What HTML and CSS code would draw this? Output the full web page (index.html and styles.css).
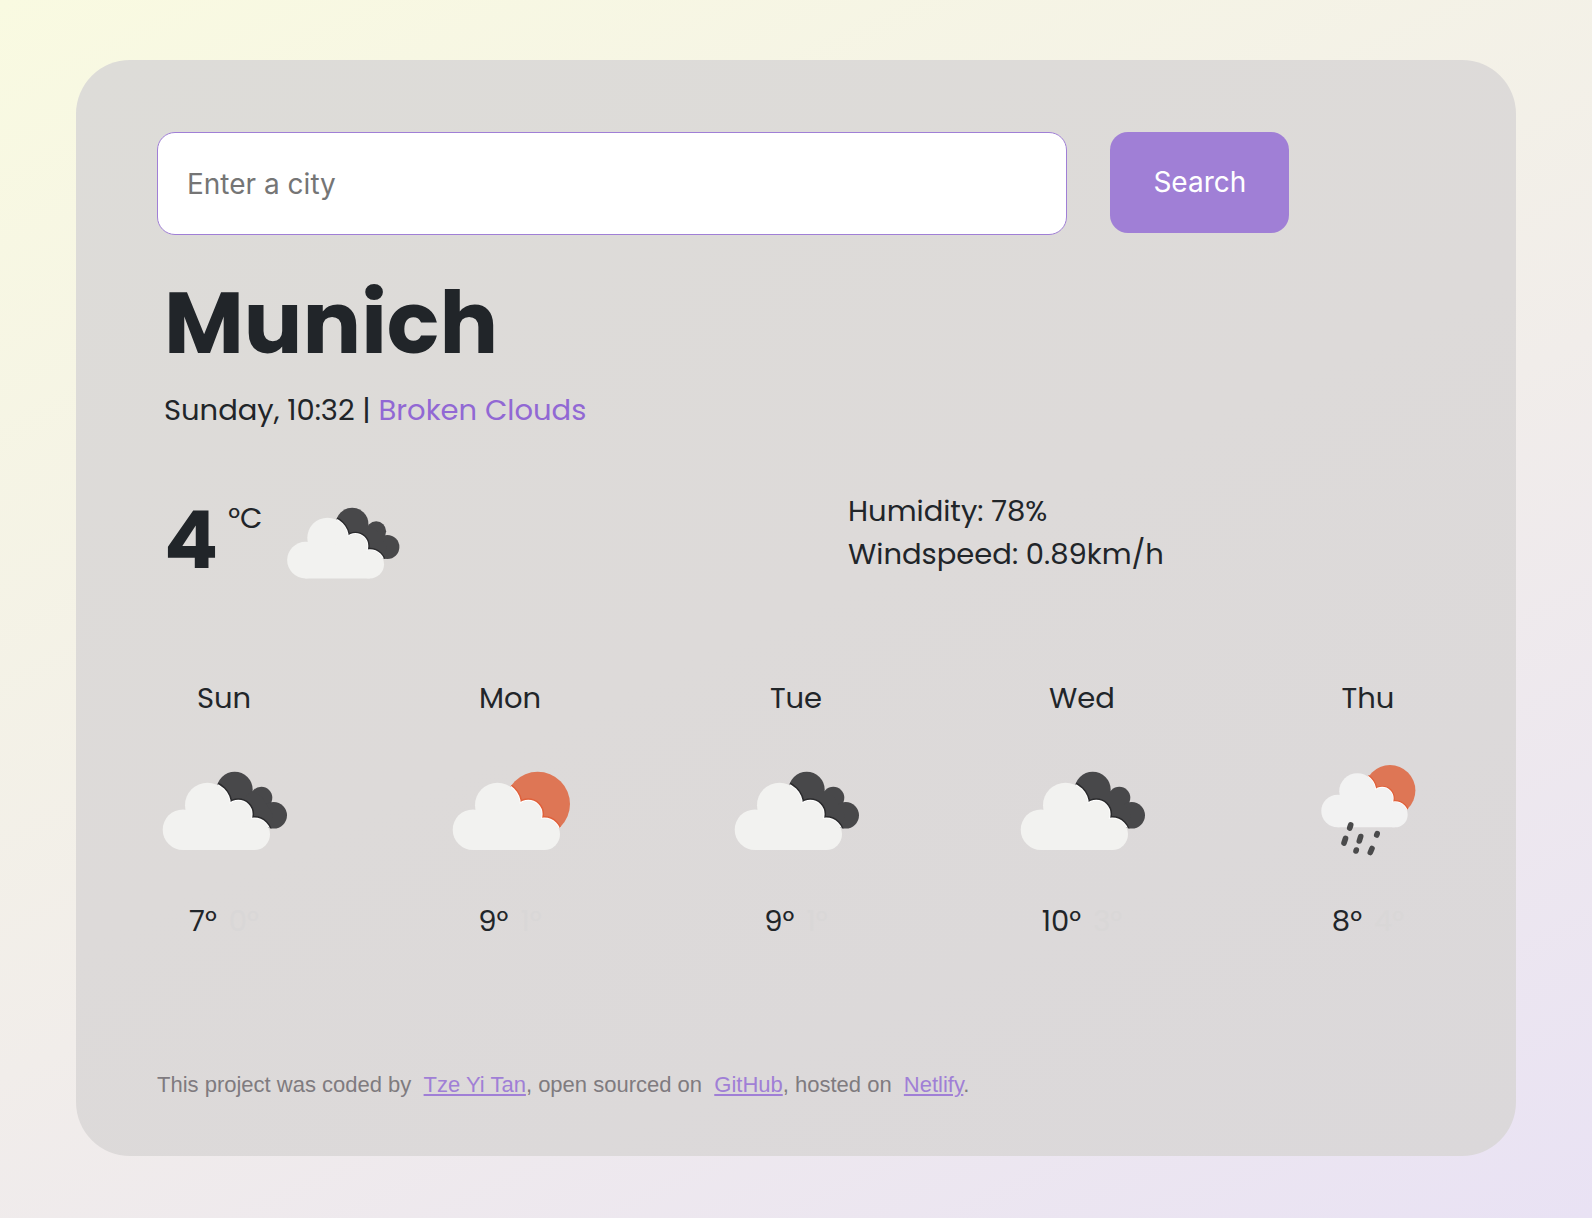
FILE: index.html
```html
<!DOCTYPE html>
<html lang="en">
<head>
<meta charset="utf-8">
<meta name="viewport" content="width=device-width, initial-scale=1">
<title>Weather in Munich</title>
<link rel="stylesheet" href="styles.css">
</head>
<body>
<svg class="sprite" aria-hidden="true">
  <defs>
    <g id="cloud">
      <circle cx="26" cy="88.7" r="20.3"/>
      <circle cx="50.5" cy="64.2" r="22.5"/>
      <circle cx="81.3" cy="73" r="13.3"/>
      <circle cx="97.3" cy="93.3" r="15.7"/>
      <path d="M26 109V88L50 70L81 73L97 92V109Z"/>
    </g>
    <g id="dark">
      <circle cx="77.7" cy="48.7" r="18"/>
      <circle cx="104.3" cy="56.7" r="11"/>
      <circle cx="116.7" cy="74.3" r="13.3"/>
      <path d="M77 66L95 50L105 56L116 74L112 86L84 86Z"/>
    </g>
    <clipPath id="dark-clip">
      <circle cx="77.7" cy="48.7" r="18"/>
      <circle cx="104.3" cy="56.7" r="11"/>
      <circle cx="116.7" cy="74.3" r="13.3"/>
      <path d="M77 66L95 50L105 56L116 74L112 86L84 86Z"/>
    </clipPath>
    <clipPath id="sun-clip"><circle cx="90.7" cy="63" r="32.3"/></clipPath>
    <symbol id="icon-broken" viewBox="0 0 134 134">
      <use href="#dark" fill="#48484a"/>
      <g clip-path="url(#dark-clip)">
        <use href="#cloud" fill="none" stroke="#2b2b2d" stroke-width="5"/>
        <use href="#cloud" fill="none" stroke="#ffffff" stroke-width="2"/>
      </g>
      <use href="#cloud" fill="#f2f2f0"/>
    </symbol>
    <symbol id="icon-partly" viewBox="0 0 134 134">
      <g transform="translate(4 0)">
        <circle cx="90.7" cy="63" r="32.3" fill="#de7655"/>
        <g clip-path="url(#sun-clip)">
          <use href="#cloud" fill="none" stroke="#e0623c" stroke-width="5"/>
          <use href="#cloud" fill="none" stroke="#ffffff" stroke-width="2"/>
        </g>
        <use href="#cloud" fill="#f2f2f0"/>
      </g>
    </symbol>
    <symbol id="icon-rain" viewBox="0 0 134 134">
      <g transform="translate(15.7 -1.4) scale(.805)">
        <circle cx="91" cy="63.2" r="31.6" fill="#de7655"/>
        <g clip-path="url(#sun-clip)">
          <use href="#cloud" fill="none" stroke="#e0623c" stroke-width="5"/>
          <use href="#cloud" fill="none" stroke="#ffffff" stroke-width="2"/>
        </g>
        <use href="#cloud" fill="#f2f2f2"/>
      </g>
      <path d="M49.700 84L48.700 87M44.500 97.500L43 102M59.700 95.500L58.300 100M76.200 92.700L75.700 94M55.300 109L55 110M71 107.500L69.300 111.500" fill="none" stroke="#4a4a4b" stroke-width="5.600" stroke-linecap="round"/>
    </symbol>
  </defs>
</svg>
<main class="card">
  <form class="search" onsubmit="return false">
    <input class="search-input" type="search" placeholder="Enter a city" aria-label="City">
    <button class="search-button" type="submit">Search</button>
  </form>
  <header class="place">
    <h1 class="city">Munich</h1>
    <p class="details">Sunday, 10:32 | <span class="condition">Broken Clouds</span></p>
  </header>
  <section class="current">
    <div class="now">
      <span class="temperature">4</span>
      <span class="unit">°C</span>
      <svg class="now-icon" role="img" aria-label="Broken clouds"><use href="#icon-broken"/></svg>
    </div>
    <div class="conditions">
      <div>Humidity: 78%</div>
      <div>Windspeed: 0.89km/h</div>
    </div>
  </section>
  <section class="forecast">
    <div class="day">
      <div>Sun</div>
      <svg class="day-icon" role="img" aria-label="Broken clouds"><use href="#icon-broken"/></svg>
      <div class="range"><span>7°</span><span class="low">0°</span></div>
    </div>
    <div class="day">
      <div>Mon</div>
      <svg class="day-icon" role="img" aria-label="Partly cloudy"><use href="#icon-partly"/></svg>
      <div class="range"><span>9°</span><span class="low">1°</span></div>
    </div>
    <div class="day">
      <div>Tue</div>
      <svg class="day-icon" role="img" aria-label="Broken clouds"><use href="#icon-broken"/></svg>
      <div class="range"><span>9°</span><span class="low">1°</span></div>
    </div>
    <div class="day">
      <div>Wed</div>
      <svg class="day-icon" role="img" aria-label="Broken clouds"><use href="#icon-broken"/></svg>
      <div class="range"><span>10°</span><span class="low">3°</span></div>
    </div>
    <div class="day">
      <div>Thu</div>
      <svg class="day-icon" role="img" aria-label="Rain"><use href="#icon-rain"/></svg>
      <div class="range"><span>8°</span><span class="low">4°</span></div>
    </div>
  </section>
  <footer class="credits">This project was coded by &nbsp;<a href="#author">Tze Yi Tan</a>, open sourced on &nbsp;<a href="#github">GitHub</a>, hosted on &nbsp;<a href="#netlify">Netlify</a>.</footer>
</main>
</body>
</html>
```

FILE: styles.css
```css
* {
  box-sizing: border-box;
}

body {
  margin: 0;
  min-height: 100vh;
  padding: 60px 76px;
  background: linear-gradient(155deg, #f9fae1 0%, #f1edea 55%, #e9e2f4 100%);
  color: #212529;
  font-family: Poppins, Inter, sans-serif;
  font-size: 29px;
  line-height: 43px;
}

.sprite {
  position: absolute;
  width: 0;
  height: 0;
}

.card {
  padding: 72px 81px 50px;
  border-radius: 54px;
  background: linear-gradient(155deg, #dddcd8 0%, #dddad9 50%, #dbd8da 100%);
}

.search {
  display: flex;
  align-items: flex-start;
  gap: 43px;
}

.search-input {
  flex: 0 0 auto;
  width: calc(71% + 3px);
  height: 103px;
  padding: 0 29px;
  border: 1px solid #a07fd6;
  border-radius: 18px;
  background: #ffffff;
  color: #212529;
  font: 28px/43px Inter, sans-serif;
  appearance: none;
}

.search-input::placeholder {
  color: #757575;
  opacity: 1;
}

.search-button {
  height: 101px;
  padding: 0 43px;
  border: 0;
  border-radius: 18px;
  background: #a07fd6;
  color: #ffffff;
  font: 28px/43px Inter, sans-serif;
}

.place {
  padding: 34px 7px 0;
}

.city {
  margin: 0;
  font-size: 87px;
  font-weight: 700;
  line-height: 108px;
}

.details {
  margin: 12px 0 0;
}

.condition {
  color: #9168d4;
}

.current {
  display: grid;
  grid-template-columns: 1fr 1fr;
  padding: 48px 7px 0;
}

.now {
  display: flex;
  align-items: flex-start;
}

.temperature {
  font-size: 80px;
  font-weight: 700;
  line-height: 120px;
}

.unit {
  margin: 17px 20px 0 10px;
}

.now-icon {
  width: 121px;
  height: 121px;
}

.conditions {
  padding: 10px 52px 0;
}

.forecast {
  display: flex;
  justify-content: space-between;
  padding-top: 76px;
}

.day {
  display: flex;
  flex-direction: column;
  align-items: center;
  width: 134px;
}

.day-icon {
  width: 134px;
  height: 134px;
  margin: 21px 0 25px;
}

.range {
  display: flex;
  gap: 12px;
}

.low {
  color: #d9d7d7;
}

.credits {
  margin-top: 120px;
  color: #7f7b7f;
  font: 22px/43px "Liberation Sans", Arial, sans-serif;
}

.credits a {
  color: #a07fd6;
  text-decoration-thickness: 2px;
  text-underline-offset: 2px;
}
```
